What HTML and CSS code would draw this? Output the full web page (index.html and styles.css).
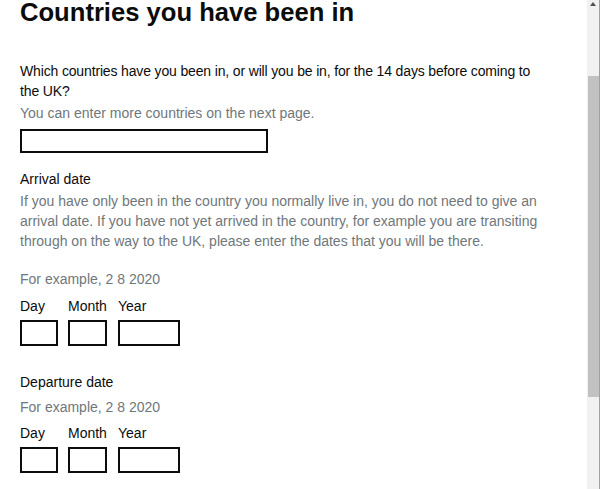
FILE: index.html
```html
<!DOCTYPE html>
<html lang="en">
<head>
    <meta charset="UTF-8">
    <meta name="viewport" content="width=device-width, initial-scale=1.0">
    <title>Countries you have been in</title>
    <link rel="stylesheet" href="styles.css">
</head>
<body>
    <div class="frame">
        <main class="page">
            <h1 class="heading">Countries you have been in</h1>

            <div class="form-group">
                <label class="question" for="country">Which countries have you been in, or will you be in, for the 14 days before coming to the UK?</label>
                <div class="hint hint-question">You can enter more countries on the next page.</div>
                <input class="input input-wide" id="country" type="text">
            </div>

            <fieldset class="date-group arrival">
                <legend class="date-legend">Arrival date</legend>
                <div class="hint hint-para">If you have only been in the country you normally live in, you do not need to give an arrival date. If you have not yet arrived in the country, for example you are transiting through on the way to the UK, please enter the dates that you will be there.</div>
                <div class="hint hint-example">For example, 2 8 2020</div>
                <div class="date-inputs">
                    <div class="date-item">
                        <label class="date-label">Day</label>
                        <input class="input input-day" type="text">
                    </div>
                    <div class="date-item">
                        <label class="date-label">Month</label>
                        <input class="input input-month" type="text">
                    </div>
                    <div class="date-item date-item-year">
                        <label class="date-label">Year</label>
                        <input class="input input-year" type="text">
                    </div>
                </div>
            </fieldset>

            <fieldset class="date-group departure">
                <legend class="date-legend">Departure date</legend>
                <div class="hint hint-example-short">For example, 2 8 2020</div>
                <div class="date-inputs">
                    <div class="date-item">
                        <label class="date-label">Day</label>
                        <input class="input input-day" type="text">
                    </div>
                    <div class="date-item">
                        <label class="date-label">Month</label>
                        <input class="input input-month" type="text">
                    </div>
                    <div class="date-item date-item-year">
                        <label class="date-label">Year</label>
                        <input class="input input-year" type="text">
                    </div>
                </div>
            </fieldset>
        </main>

        <div class="scrollbar">
            <div class="scroll-arrow"></div>
            <div class="scroll-track">
                <div class="scroll-thumb"></div>
            </div>
        </div>
        <div class="edge"></div>
    </div>
</body>
</html>
```

FILE: styles.css
```css
html, body {
    margin: 0;
    padding: 0;
    height: 100%;
    overflow: hidden;
    background: #fff;
}
body {
    font-family: "Liberation Sans", Arial, sans-serif;
    font-size: 14px;
    line-height: 20px;
    color: #0b0c0c;
}
.frame {
    display: flex;
    height: 489px;
}
.page {
    flex: 1;
    padding: 0 20px;
}
.heading {
    margin: 0;
    font-size: 25.6px;
    line-height: 24px;
    font-weight: bold;
}
.form-group {
    margin-top: 37px;
}
.question {
    display: block;
    max-width: 528px;
    letter-spacing: -0.15px;
}
.hint {
    color: #6f777b;
}
.hint-question {
    margin-top: 2px;
}
.input {
    display: block;
    box-sizing: border-box;
    height: 26px;
    margin: 0;
    padding: 0 4px;
    border: 2px solid #0b0c0c;
    border-radius: 0;
    background: #fff;
    font: inherit;
}
.input-wide {
    width: 248px;
    height: 24px;
    margin-top: 6px;
}
.date-group {
    margin: 0;
    padding: 0;
    border: 0;
    min-width: 0;
}
.date-legend {
    padding: 0;
}
.arrival {
    margin-top: 16px;
}
.departure {
    margin-top: 26px;
}
.hint-para {
    margin-top: 2px;
    max-width: 530px;
}
.hint-example {
    margin-top: 18px;
}
.hint-example-short {
    margin-top: 5px;
}
.date-inputs {
    display: flex;
    gap: 10px;
    margin-top: 7px;
}
.departure .date-inputs {
    margin-top: 6px;
}
.date-item {
    display: flex;
    flex-direction: column;
    gap: 4px;
}
.date-item-year {
    margin-left: 1px;
}
.input-day {
    width: 38px;
}
.input-month {
    width: 39px;
}
.input-year {
    width: 62px;
}
.scrollbar {
    width: 12px;
    display: flex;
    flex-direction: column;
    background: #f1f1f1;
}
.scroll-arrow {
    height: 10px;
    position: relative;
}
.scroll-arrow::after {
    content: "";
    position: absolute;
    left: 3px;
    top: 2px;
    border-left: 3px solid transparent;
    border-right: 3px solid transparent;
    border-bottom: 4px solid #505050;
}
.scroll-track {
    flex: 1;
    padding-top: 66px;
}
.scroll-thumb {
    height: 321px;
    margin-left: 1px;
    background: #c1c1c1;
}
.edge {
    width: 1px;
    background: #a0a0a0;
}
```
